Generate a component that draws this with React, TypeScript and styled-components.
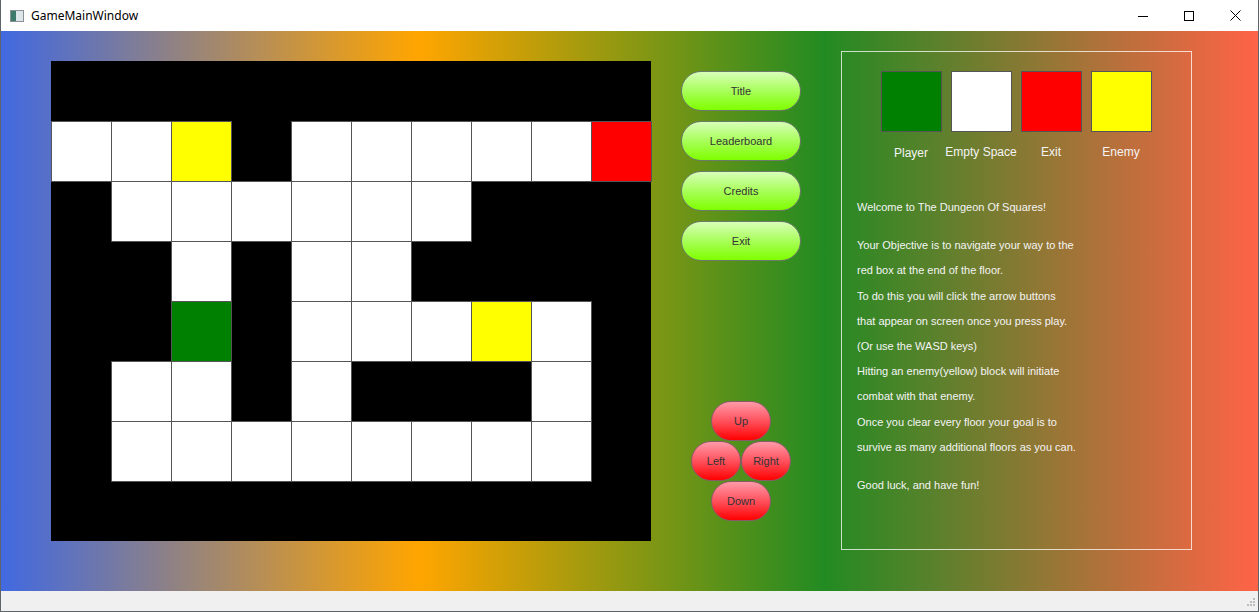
import styled, { createGlobalStyle } from "styled-components";

const GlobalStyle = createGlobalStyle`
  html, body {
    margin: 0;
    padding: 0;
    overflow: hidden;
  }
  body {
    font-family: "Liberation Sans", Arial, sans-serif;
  }
`;

// 0 = wall, 1 = empty, 2 = player, 3 = exit, 4 = enemy
const MAP: number[][] = [
  [0, 0, 0, 0, 0, 0, 0, 0, 0, 0],
  [1, 1, 4, 0, 1, 1, 1, 1, 1, 3],
  [0, 1, 1, 1, 1, 1, 1, 0, 0, 0],
  [0, 0, 1, 0, 1, 1, 0, 0, 0, 0],
  [0, 0, 2, 0, 1, 1, 1, 4, 1, 0],
  [0, 1, 1, 0, 1, 0, 0, 0, 1, 0],
  [0, 1, 1, 1, 1, 1, 1, 1, 1, 0],
  [0, 0, 0, 0, 0, 0, 0, 0, 0, 0],
];

const CELL_COLORS: Record<number, string> = {
  1: "#ffffff",
  2: "#008000",
  3: "#ff0000",
  4: "#ffff00",
};

const Window = styled.div`
  width: 1259px;
  height: 612px;
  box-sizing: border-box;
  border: 1px solid #5f6468;
  border-top: none;
  display: flex;
  flex-direction: column;
  background: #f0f0f0;
`;

const TitleBar = styled.div`
  height: 31px;
  flex-shrink: 0;
  background: #ffffff;
  display: flex;
  align-items: center;
  padding-left: 9px;
  font-family: "Noto Sans", "Liberation Sans", sans-serif;
  font-size: 12px;
  color: #000;
`;

const AppIcon = styled.div`
  width: 14px;
  height: 12px;
  margin-right: 7px;
  box-sizing: border-box;
  border: 1px solid #8a9096;
  background: linear-gradient(90deg, #3c7a6a 0 40%, #dfe6ea 40% 100%);
`;

const TitleText = styled.span`
  flex: 1;
`;

const WinButton = styled.div`
  width: 46px;
  height: 30px;
  display: flex;
  align-items: center;
  justify-content: center;
`;

const Content = styled.div`
  height: 560px;
  flex-shrink: 0;
  background: linear-gradient(
    90deg,
    #4169e1 0%,
    #ffa500 33.2%,
    #228b22 65.5%,
    #ff6347 100%
  );
  display: flex;
  padding: 30px 0 0 50px;
  box-sizing: border-box;
`;

const Board = styled.div`
  width: 600px;
  height: 480px;
  background: #000;
  display: grid;
  grid-template-columns: repeat(10, 60px);
  grid-template-rows: repeat(8, 60px);
`;

const Cell = styled.div<{ $color?: string }>`
  width: 61px;
  height: 61px;
  box-sizing: border-box;
  background: ${(p) => p.$color ?? "transparent"};
  border: ${(p) => (p.$color ? "1px solid #555" : "none")};
`;

const MiddleColumn = styled.div`
  width: 120px;
  margin-left: 30px;
  margin-top: 10px;
  display: flex;
  flex-direction: column;
  align-items: center;
`;

const MenuList = styled.div`
  display: flex;
  flex-direction: column;
  gap: 10px;
`;

const PillButton = styled.div<{ $w: number }>`
  width: ${(p) => p.$w}px;
  height: 40px;
  box-sizing: border-box;
  border: 1px solid #6c7a6a;
  border-radius: 20px;
  display: flex;
  align-items: center;
  justify-content: center;
  font-family: "Liberation Sans", Arial, sans-serif;
  font-size: 11px;
  color: #333;
`;

const MenuButton = styled(PillButton)`
  background: linear-gradient(180deg, #d8ffb8 0%, #a8ff5a 50%, #7fff00 100%);
`;

const ArrowButton = styled(PillButton)`
  border-color: #8a5a6a;
  background: linear-gradient(180deg, #ff9aa8 0%, #ff4a55 55%, #ff0000 100%);
`;

const DPad = styled.div`
  margin-top: 140px;
  display: flex;
  flex-direction: column;
  align-items: center;
`;

const DPadRow = styled.div`
  display: flex;
`;

const InfoPanel = styled.div`
  width: 351px;
  height: 499px;
  box-sizing: border-box;
  margin-left: 40px;
  margin-top: -10px;
  border: 1px solid rgba(255, 255, 255, 0.75);
  padding: 19px 0 0 15px;
  color: #f4f4f4;
`;

const Legend = styled.div`
  display: flex;
  gap: 10px;
  padding-left: 24px;
`;

const LegendItem = styled.div`
  width: 60px;
  display: flex;
  flex-direction: column;
  align-items: center;
`;

const Swatch = styled.div<{ $color: string }>`
  width: 61px;
  height: 61px;
  box-sizing: border-box;
  border: 1px solid #555;
  background: ${(p) => p.$color};
`;

const LegendLabel = styled.div<{ $offset?: number }>`
  margin-top: ${(p) => 13 + (p.$offset ?? 0)}px;
  font-family: "Liberation Sans", Arial, sans-serif;
  font-size: 12px;
  white-space: nowrap;
  line-height: 14px;
`;

const Instructions = styled.div`
  margin-top: 35px;
  font-family: "Liberation Sans", Arial, sans-serif;
  font-size: 11px;
  line-height: 25.2px;
`;

const Paragraph = styled.p`
  margin: 0 0 13px;
`;

const Line = styled.div``;

const StatusBar = styled.div`
  flex: 1;
  background: #f0f0f0;
  position: relative;
`;

const Grip = styled.svg`
  position: absolute;
  right: 2px;
  bottom: 2px;
`;

const legend = [
  { color: "#008000", label: "Player", offset: 1 },
  { color: "#ffffff", label: "Empty Space" },
  { color: "#ff0000", label: "Exit" },
  { color: "#ffff00", label: "Enemy" },
];

export default function App() {
  return (
    <>
      <GlobalStyle />
      <Window>
        <TitleBar>
          <AppIcon />
          <TitleText>GameMainWindow</TitleText>
          <WinButton>
            <svg width="10" height="10" viewBox="0 0 10 10">
              <path d="M0 5.5h10" stroke="#000" strokeWidth="1" />
            </svg>
          </WinButton>
          <WinButton>
            <svg width="10" height="10" viewBox="0 0 10 10">
              <rect x="0.5" y="0.5" width="9" height="9" fill="none" stroke="#000" />
            </svg>
          </WinButton>
          <WinButton>
            <svg width="11" height="11" viewBox="0 0 11 11">
              <path d="M0.5 0.5l10 10M10.5 0.5l-10 10" stroke="#000" strokeWidth="1" />
            </svg>
          </WinButton>
        </TitleBar>
        <Content>
          <Board>
            {MAP.flatMap((row, r) =>
              row.map((v, c) => <Cell key={`${r}-${c}`} $color={CELL_COLORS[v]} />)
            )}
          </Board>
          <MiddleColumn>
            <MenuList>
              <MenuButton $w={120}>Title</MenuButton>
              <MenuButton $w={120}>Leaderboard</MenuButton>
              <MenuButton $w={120}>Credits</MenuButton>
              <MenuButton $w={120}>Exit</MenuButton>
            </MenuList>
            <DPad>
              <ArrowButton $w={60}>Up</ArrowButton>
              <DPadRow>
                <ArrowButton $w={50}>Left</ArrowButton>
                <ArrowButton $w={50}>Right</ArrowButton>
              </DPadRow>
              <ArrowButton $w={60}>Down</ArrowButton>
            </DPad>
          </MiddleColumn>
          <InfoPanel>
            <Legend>
              {legend.map((item) => (
                <LegendItem key={item.label}>
                  <Swatch $color={item.color} />
                  <LegendLabel $offset={item.offset}>{item.label}</LegendLabel>
                </LegendItem>
              ))}
            </Legend>
            <Instructions>
              <Paragraph>Welcome to The Dungeon Of Squares!</Paragraph>
              <Paragraph>
                <Line>Your Objective is to navigate your way to the</Line>
                <Line>red box at the end of the floor.</Line>
                <Line>To do this you will click the arrow buttons</Line>
                <Line>that appear on screen once you press play.</Line>
                <Line>(Or use the WASD keys)</Line>
                <Line>Hitting an enemy(yellow) block will initiate</Line>
                <Line>combat with that enemy.</Line>
                <Line>Once you clear every floor your goal is to</Line>
                <Line>survive as many additional floors as you can.</Line>
              </Paragraph>
              <Paragraph>Good luck, and have fun!</Paragraph>
            </Instructions>
          </InfoPanel>
        </Content>
        <StatusBar>
          <Grip width="12" height="12" viewBox="0 0 12 12">
            <g fill="#bdbdbd">
              <rect x="9" y="1" width="2" height="2" />
              <rect x="6" y="4" width="2" height="2" />
              <rect x="9" y="4" width="2" height="2" />
              <rect x="3" y="7" width="2" height="2" />
              <rect x="6" y="7" width="2" height="2" />
              <rect x="9" y="7" width="2" height="2" />
            </g>
          </Grip>
        </StatusBar>
      </Window>
    </>
  );
}
